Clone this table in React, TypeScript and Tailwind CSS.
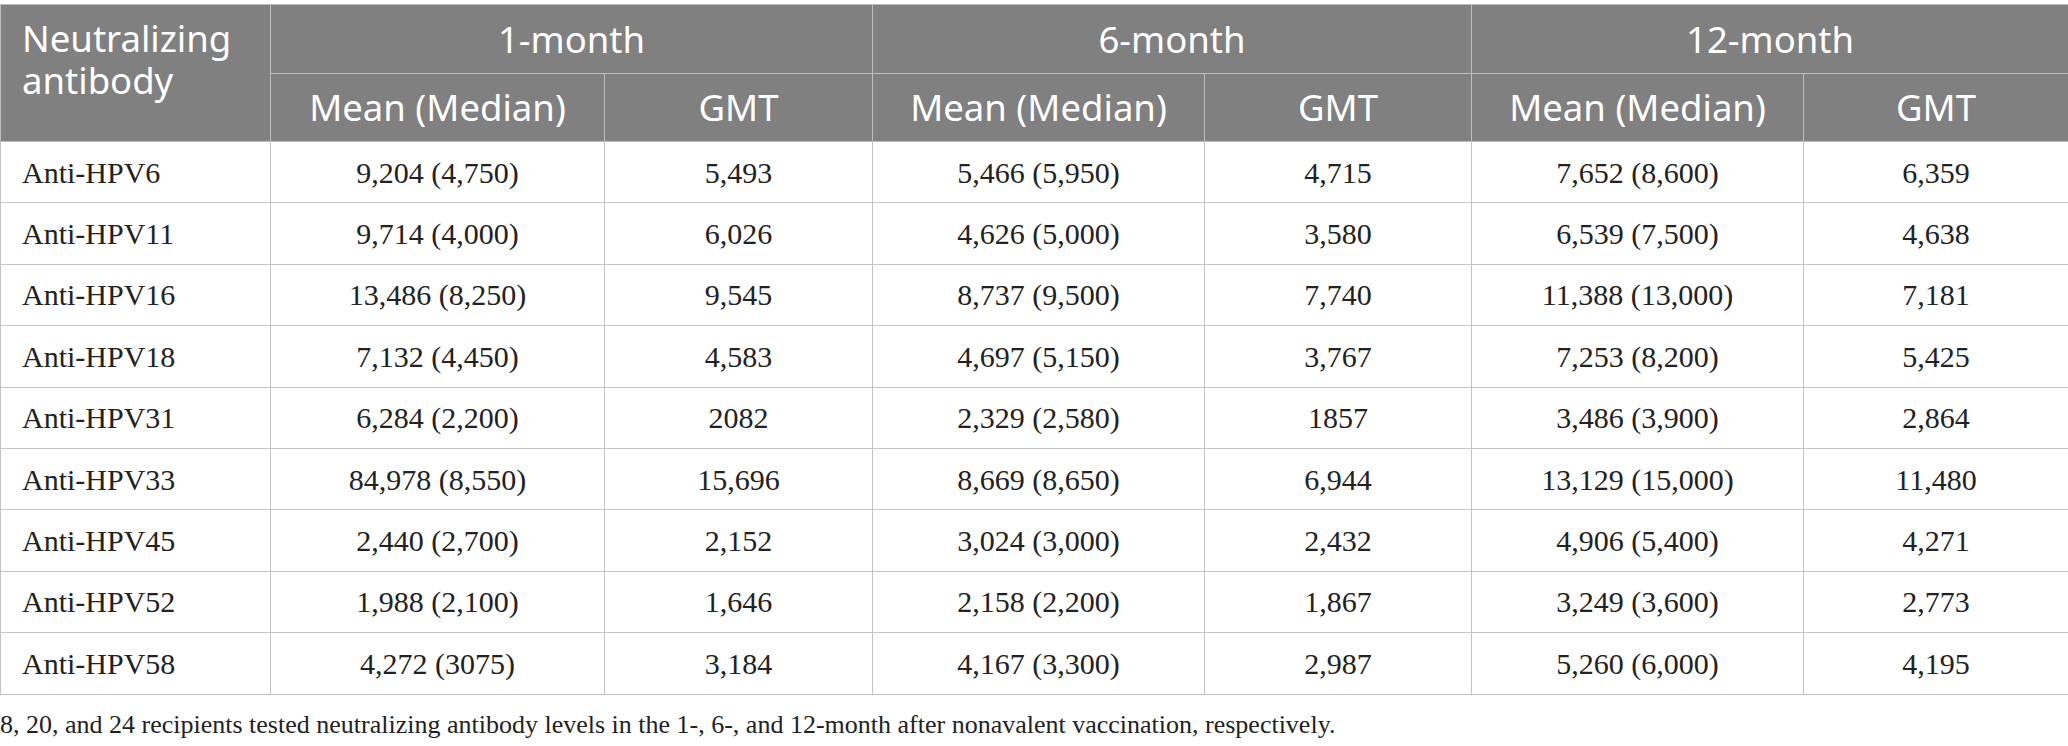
const rows: [string, string, string, string, string, string, string][] = [
  ['Anti-HPV6', '9,204 (4,750)', '5,493', '5,466 (5,950)', '4,715', '7,652 (8,600)', '6,359'],
  ['Anti-HPV11', '9,714 (4,000)', '6,026', '4,626 (5,000)', '3,580', '6,539 (7,500)', '4,638'],
  ['Anti-HPV16', '13,486 (8,250)', '9,545', '8,737 (9,500)', '7,740', '11,388 (13,000)', '7,181'],
  ['Anti-HPV18', '7,132 (4,450)', '4,583', '4,697 (5,150)', '3,767', '7,253 (8,200)', '5,425'],
  ['Anti-HPV31', '6,284 (2,200)', '2082', '2,329 (2,580)', '1857', '3,486 (3,900)', '2,864'],
  ['Anti-HPV33', '84,978 (8,550)', '15,696', '8,669 (8,650)', '6,944', '13,129 (15,000)', '11,480'],
  ['Anti-HPV45', '2,440 (2,700)', '2,152', '3,024 (3,000)', '2,432', '4,906 (5,400)', '4,271'],
  ['Anti-HPV52', '1,988 (2,100)', '1,646', '2,158 (2,200)', '1,867', '3,249 (3,600)', '2,773'],
  ['Anti-HPV58', '4,272 (3075)', '3,184', '4,167 (3,300)', '2,987', '5,260 (6,000)', '4,195'],
];

const periods = ['1-month', '6-month', '12-month'];

export default function App() {
  return (
    <div className="w-[2068px] bg-white pt-[4px]">
      <table className="w-full table-fixed border-collapse">
        <colgroup>
          <col className="w-[270px]" />
          <col className="w-[334px]" />
          <col className="w-[268px]" />
          <col className="w-[332px]" />
          <col className="w-[267px]" />
          <col className="w-[332px]" />
          <col className="w-[265px]" />
        </colgroup>
        <thead className="bg-[#808080] text-white font-['Noto_Sans',sans-serif] text-[36.5px]">
          <tr className="h-[69px]">
            <th
              rowSpan={2}
              className="border border-[#bdbdbd] px-[21px] pt-[12px] text-left align-top font-normal leading-[42px]"
            >
              <div>Neutralizing</div>
              <div>antibody</div>
            </th>
            {periods.map((p) => (
              <th key={p} colSpan={2} className="border border-[#bdbdbd] text-center font-normal leading-none">
                {p}
              </th>
            ))}
          </tr>
          <tr className="h-[68px]">
            {periods.map((p) => (
              <>
                <th key={p + 'm'} className="border border-[#bdbdbd] text-center font-normal leading-none">
                  Mean (Median)
                </th>
                <th key={p + 'g'} className="border border-[#bdbdbd] text-center font-normal leading-none">
                  GMT
                </th>
              </>
            ))}
          </tr>
        </thead>
        <tbody className="font-['Liberation_Serif',serif] text-[30px] text-[#222]">
          {rows.map((r) => (
            <tr key={r[0]} className="h-[61.4px]">
              {r.map((c, i) => (
                <td
                  key={i}
                  className={
                    i === 0
                      ? 'border border-[#c4c4c4] px-[21px] text-left'
                      : 'border border-[#c4c4c4] text-center'
                  }
                >
                  {c}
                </td>
              ))}
            </tr>
          ))}
        </tbody>
      </table>
      <p className="pt-[15px] font-['Liberation_Serif',serif] text-[26px] leading-[30px] text-[#222]">
        8, 20, and 24 recipients tested neutralizing antibody levels in the 1-, 6-, and 12-month after nonavalent vaccination, respectively.
      </p>
    </div>
  );
}
